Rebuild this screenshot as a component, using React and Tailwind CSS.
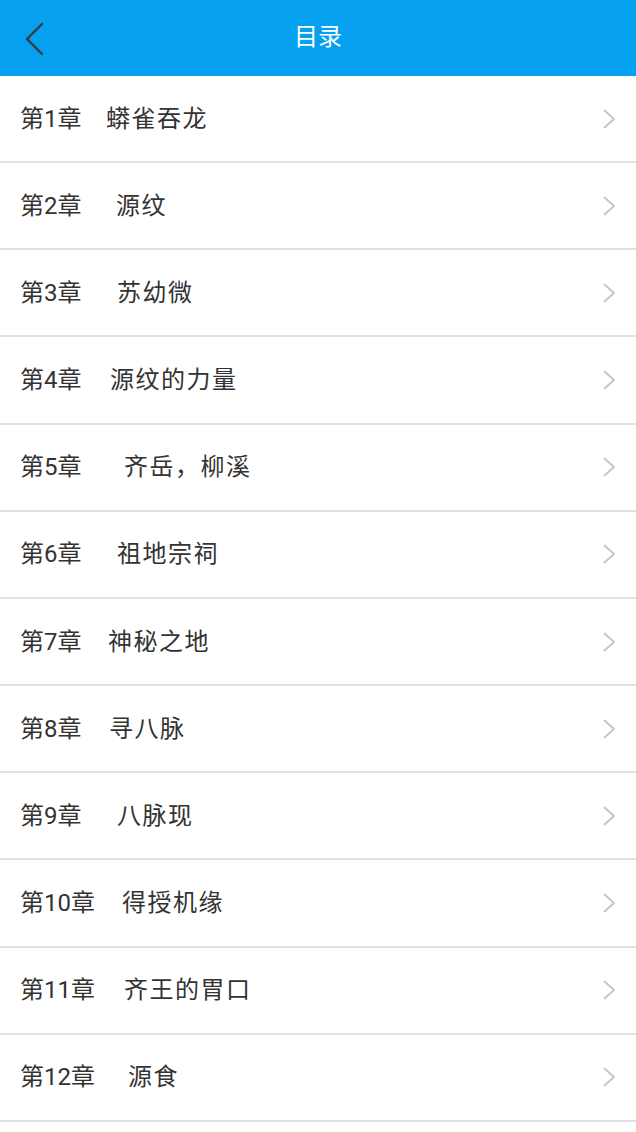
import React from "react";

const chapters = [
  { no: "第1章", title: "蟒雀吞龙", w: "w-[86px]" },
  { no: "第2章", title: "源纹", w: "w-[96px]" },
  { no: "第3章", title: "苏幼微", w: "w-[97px]" },
  { no: "第4章", title: "源纹的力量", w: "w-[90px]" },
  { no: "第5章", title: "齐岳，柳溪", w: "w-[104px]" },
  { no: "第6章", title: "祖地宗祠", w: "w-[97px]" },
  { no: "第7章", title: "神秘之地", w: "w-[88px]" },
  { no: "第8章", title: "寻八脉", w: "w-[89px]" },
  { no: "第9章", title: "八脉现", w: "w-[97px]" },
  { no: "第10章", title: "得授机缘", w: "w-[102px]" },
  { no: "第11章", title: "齐王的胃口", w: "w-[104px]" },
  { no: "第12章", title: "源食", w: "w-[108px]" },
];

const ChevronRight = () => (
  <svg width="14" height="20" viewBox="0 0 14 20" fill="none">
    <path d="M2.5 1.5 L12 10 L2.5 18.5" stroke="#c4c4c4" strokeWidth="1.8" strokeLinecap="round" strokeLinejoin="round" />
  </svg>
);

const App = () => {
  return (
    <div className="min-h-screen bg-white font-['Roboto','Noto_Sans_CJK_SC',sans-serif]">
      <header className="relative h-[76px] bg-[#05a0ef] flex items-center justify-center">
        <button className="absolute left-[24px] top-[22px]">
          <svg width="22" height="34" viewBox="0 0 22 34" fill="none">
            <path d="M18 2 L3 17 L18 32" stroke="#3a3a3a" strokeWidth="2.4" strokeLinecap="round" strokeLinejoin="round" />
          </svg>
        </button>
        <h1 className="text-white text-[24px] leading-none pb-[2px]">目录</h1>
      </header>

      <ul>
        {chapters.map((c) => (
          <li
            key={c.no}
            className="h-[87.17px] border-b-2 border-[#e2e2e2] flex items-center pl-[20px] pr-[20px] text-[24px] text-[#333333]"
          >
            <span className={`${c.w} shrink-0`}>{c.no}</span>
            <span className="flex-1 tracking-[1.5px]">{c.title}</span>
            <ChevronRight />
          </li>
        ))}
      </ul>
    </div>
  );
};

export default App;
